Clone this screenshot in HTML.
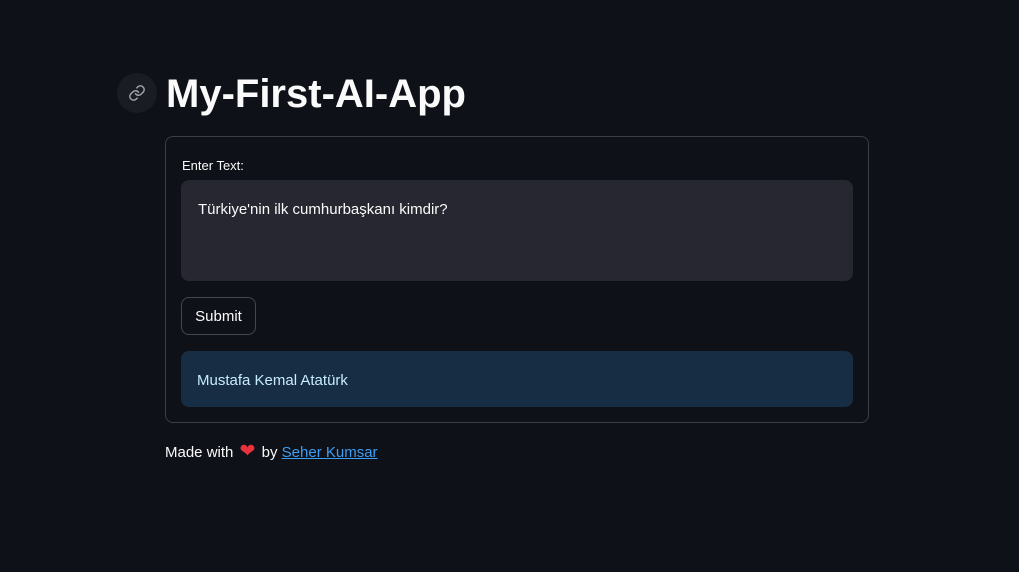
<!DOCTYPE html>
<html><head><meta charset="utf-8"><style>
body{margin:0;width:1019px;height:572px;background:#0e1117;font-family:"Liberation Sans",sans-serif;color:#fafafa;position:relative;overflow:hidden}
.icon{position:absolute;left:117px;top:73px;width:40px;height:40px;border-radius:50%;background:#1a1c24;display:flex;align-items:center;justify-content:center}
h1{position:absolute;left:166px;top:68px;margin:0;font-size:40px;font-weight:bold;letter-spacing:0;line-height:52px}
.form{position:absolute;left:165px;top:136px;width:702px;height:285px;border:1px solid #3c3e46;border-radius:8px}
.lbl{position:absolute;left:16px;top:21px;font-size:13px}
.ta{position:absolute;left:15px;top:43px;width:672px;height:101px;background:#262730;border-radius:8px;font-size:15px;box-sizing:border-box;padding:21px 17px}
.btn{position:absolute;left:15px;top:160px;width:75px;height:38px;border:1px solid #45474f;border-radius:8px;box-sizing:border-box;font-size:15px;display:flex;align-items:center;justify-content:center}
.out{position:absolute;left:15px;top:214px;width:672px;height:56px;background:#172d43;border-radius:8px;color:#c7ebff;font-size:15px;box-sizing:border-box;padding:21px 16px}
.foot{position:absolute;left:165px;top:443px;font-size:15px;line-height:18px}
.foot a{color:#3d9df3;text-decoration:underline}
</style></head><body>
<div class="icon"><svg width="18" height="18" viewBox="0 0 24 24" fill="none" stroke="#a0a3aa" stroke-width="2" stroke-linecap="round"><path d="M10 13a5 5 0 0 0 7.5.5l3-3a5 5 0 0 0-7-7l-1.7 1.7"/><path d="M14 11a5 5 0 0 0-7.5-.5l-3 3a5 5 0 0 0 7 7l1.7-1.7"/></svg></div>
<h1>My-First-AI-App</h1>
<div class="form">
<div class="lbl">Enter Text:</div>
<div class="ta">Türkiye'nin ilk cumhurbaşkanı kimdir?</div>
<div class="btn">Submit</div>
<div class="out">Mustafa Kemal Atatürk</div>
</div>
<div class="foot">Made with <span style="color:#e8333c;font-size:19px;line-height:18px;margin:0 2px">❤</span> by <a>Seher Kumsar</a></div>
</body></html>
